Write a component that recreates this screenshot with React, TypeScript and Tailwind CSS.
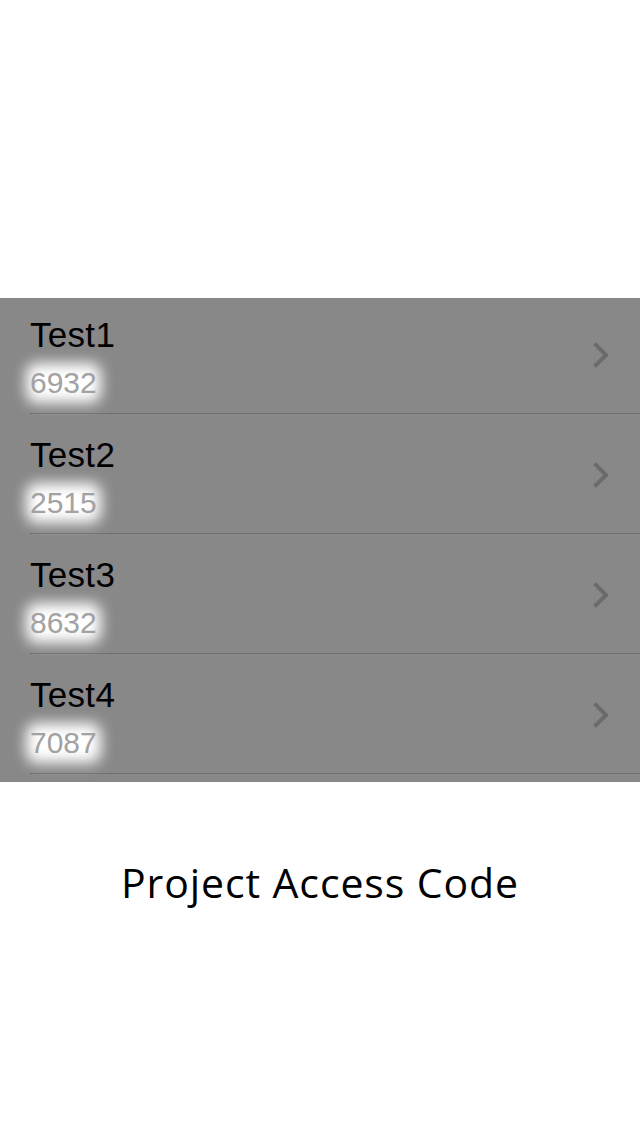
const items = [
  { name: "Test1", code: "6932" },
  { name: "Test2", code: "2515" },
  { name: "Test3", code: "8632" },
  { name: "Test4", code: "7087" },
];

function Chevron() {
  return (
    <svg width="20" height="26" viewBox="0 0 20 26" fill="none">
      <path d="M4 3 L14 13 L4 23" stroke="#6b6b6b" strokeWidth="4" strokeLinecap="square" strokeLinejoin="miter" />
    </svg>
  );
}

export default function App() {
  return (
    <div className="w-[640px] h-[1136px] bg-white overflow-hidden">
      <div className="h-[298px]" />

      <div className="h-[484px] bg-[#888888] overflow-hidden">
        <div className="-mt-[4px]">
          {items.map((it) => (
            <div key={it.name} className="h-[120px] flex flex-col">
              <div className="flex-1 flex items-start pl-[30px] pr-[28px]">
                <div className="flex-1 pt-[21px] font-['Liberation_Sans',Arial,sans-serif]">
                  <div className="text-[35px] leading-[40px] tracking-[0.3px] text-black">{it.name}</div>
                  <div className="mt-[10px] relative inline-block">
                    <span className="absolute -inset-x-[4px] -inset-y-[2px] bg-white rounded-[10px] blur-[7px]" />
                    <span className="relative block text-[30px] leading-[36px] text-[#a2a2a2]">{it.code}</span>
                  </div>
                </div>
                <div className="self-center mt-[2px]">
                  <Chevron />
                </div>
              </div>
              <div className="ml-[30px] h-px bg-[#6f6f6f]" />
            </div>
          ))}
        </div>
      </div>

      <div className="mt-[74px] text-center text-[41px] leading-[52px] tracking-[0.9px] text-black font-['Open_Sans',sans-serif]">
        Project Access Code
      </div>
    </div>
  );
}
